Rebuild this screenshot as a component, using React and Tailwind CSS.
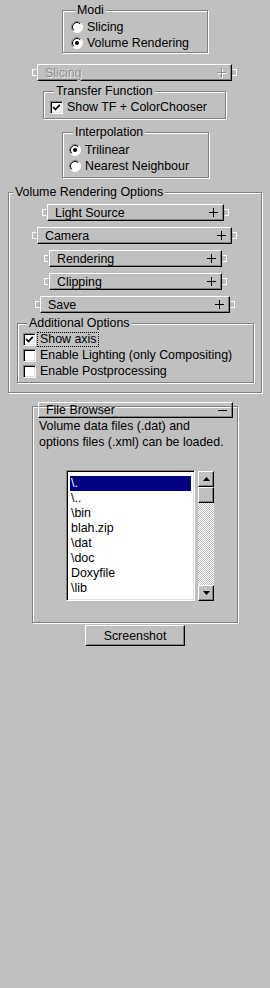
import React from 'react';

const raised =
    'border border-t-white border-l-white border-b-black border-r-black shadow-[inset_-1px_-1px_0_#808080]';

const Knob = ({ side }) => (
    <span
        className={`block shrink-0 w-[5px] h-[7px] border border-white ${side === 'left' ? 'border-r-[#a8a8a8]' : 'border-l-[#a8a8a8]'}`}
    />
);

const Sign = ({ minus, disabled }) => (
    <svg width="9" height="9" viewBox="0 0 9 9" className="shrink-0 overflow-visible">
        {disabled && <path d="M1 5.5H10M5.5 1V10" stroke="#fff" strokeWidth="1" />}
        <path
            d={minus ? 'M0 4.5H9' : 'M0 4.5H9M4.5 0V9'}
            stroke={disabled ? '#8c8c8c' : '#000'}
            strokeWidth="1"
        />
    </svg>
);

const Rollout = ({ label, className = '', knobs = true, minus, disabled, tall = true }) => (
    <div className={`flex items-center ${className}`}>
        {knobs && <Knob side="left" />}
        <div
            className={`flex-1 ${tall ? 'h-[17px]' : 'h-[16px]'} flex items-center justify-between pl-[7px] pr-[5px] leading-[14px] ${raised}`}
        >
            <span className={disabled ? 'text-[#909090] [text-shadow:1px_1px_0_#e8e8e8]' : ''}>{label}</span>
            <Sign minus={minus} disabled={disabled} />
        </div>
        {knobs && <Knob side="right" />}
    </div>
);

const Group = ({ title, className = '', children }) => (
    <fieldset
        className={`min-w-0 border border-[#808080] shadow-[inset_1px_1px_0_#fff,1px_1px_0_#fff] ${className}`}
    >
        <legend className="ml-[4px] px-[2px] leading-[14px] bg-[#c0c0c0]">{title}</legend>
        {children}
    </fieldset>
);

const Radio = ({ on }) => (
    <svg width="12" height="12" viewBox="0 0 12 12" className="shrink-0">
        <circle cx="6" cy="6" r="5.5" fill="#fff" />
        <path d="M2.1 9.9A5.5 5.5 0 0 1 9.9 2.1" fill="none" stroke="#808080" strokeWidth="1" />
        <path d="M2.8 9.2A4.5 4.5 0 0 1 9.2 2.8" fill="none" stroke="#000" strokeWidth="1" />
        <path d="M9.9 2.1A5.5 5.5 0 0 1 2.1 9.9" fill="none" stroke="#fff" strokeWidth="1" />
        {on && <circle cx="6" cy="6" r="2" fill="#000" />}
    </svg>
);

const RadioRow = ({ on, label }) => (
    <div className="flex items-center h-[16px] gap-[4px] leading-[14px]">
        <Radio on={on} />
        <span>{label}</span>
    </div>
);

const Check = ({ checked }) => (
    <span className="shrink-0 flex items-center justify-center w-[13px] h-[13px] bg-white border border-t-[#808080] border-l-[#808080] border-b-white border-r-white shadow-[inset_1px_1px_0_#000,inset_-1px_-1px_0_#dfdfdf]">
        {checked && (
            <svg width="9" height="9" viewBox="0 0 9 9">
                <polyline points="1.2,4 3.5,6.5 7.8,1.8" fill="none" stroke="#000" strokeWidth="1.8" />
            </svg>
        )}
    </span>
);

const CheckRow = ({ checked, label, focus }) => (
    <div className="flex items-center h-[16px] gap-[1px]">
        <Check checked={checked} />
        <span
            className={`px-[2px] leading-[13px] border ${focus ? 'border-dotted border-black' : 'border-transparent'}`}
        >
            {label}
        </span>
    </div>
);

const Arrow = ({ up }) => (
    <div className={`h-[16px] flex items-center justify-center ${raised}`}>
        <svg width="7" height="4" viewBox="0 0 7 4">
            <path d={up ? 'M3.5 0L7 4H0Z' : 'M0 0H7L3.5 4Z'} fill="#000" />
        </svg>
    </div>
);

const files = ['\\.', '\\..', '\\bin', 'blah.zip', '\\dat', '\\doc', 'Doxyfile', '\\lib'];

export default function App() {
    return (
        <div className="w-[270px] h-[988px] bg-[#c0c0c0] text-black text-[12.4px] font-['Liberation_Sans',Arial,sans-serif] flex flex-col">
            <Group title="Modi" className="mt-[3px] ml-[62px] w-[146px] pl-[8px] pb-[1px]">
                <div className="mt-[2px]">
                    <RadioRow label="Slicing" />
                    <RadioRow on label="Volume Rendering" />
                </div>
            </Group>

            <Rollout label="Slicing" disabled className="mt-[11px] ml-[32px] w-[205px]" />

            <Group title="Transfer Function" className="mt-[3px] ml-[43px] w-[183px] pl-[6px] pb-[3px]">
                <div className="mt-[1px]">
                    <CheckRow checked label="Show TF + ColorChooser" />
                </div>
            </Group>

            <Group title="Interpolation" className="mt-[6px] ml-[62px] w-[147px] pl-[6px] pb-[3px]">
                <div className="mt-[3px]">
                    <RadioRow on label="Trilinear" />
                    <RadioRow label="Nearest Neighbour" />
                </div>
            </Group>

            <Group title="Volume Rendering Options" className="mt-[7px] ml-[8px] w-[254px] pb-[9px]">
                <div className="flex flex-col gap-[6px] mt-[5px]">
                    <Rollout label="Light Source" className="ml-[33px] w-[187px]" />
                    <Rollout label="Camera" className="ml-[23px] w-[205px]" />
                    <Rollout label="Rendering" className="ml-[35px] w-[183px]" />
                    <Rollout label="Clipping" className="ml-[35px] w-[183px]" />
                    <Rollout label="Save" className="ml-[26px] w-[200px]" />
                </div>
                <Group title="Additional Options" className="mt-[3px] ml-[8px] w-[237px] pl-[5px] pb-[3px]">
                    <div className="mt-[1px]">
                        <CheckRow checked focus label="Show axis" />
                        <CheckRow label="Enable Lighting (only Compositing)" />
                        <CheckRow label="Enable Postprocessing" />
                    </div>
                </Group>
            </Group>

            <div className="mt-[13px] ml-[32px] w-[206px] border border-[#808080] shadow-[inset_1px_1px_0_#fff,1px_1px_0_#fff] pb-[21px]">
                <Rollout label="File Browser" minus knobs={false} tall={false} className="-mt-[5px] ml-[5px] mr-[4px]" />
                <div className="pl-[6px] leading-[16px]">
                    <p>Volume data files (.dat) and</p>
                    <p>options files (.xml) can be loaded.</p>
                </div>
                <div className="flex items-start mt-[20px] ml-[33px]">
                    <div className="w-[129px] h-[131px] bg-white border border-t-[#808080] border-l-[#808080] border-b-white border-r-white shadow-[inset_1px_1px_0_#000,inset_-1px_-1px_0_#dfdfdf] px-[3px] pt-[5px] leading-[15px]">
                        {files.map((f, i) => (
                            <div key={f} className={`h-[15px] pl-[1px] ${i === 0 ? 'bg-[#000080] text-white' : ''}`}>
                                {f}
                            </div>
                        ))}
                    </div>
                    <div className="ml-[3px] mt-[1px] w-[16px] h-[130px] flex flex-col">
                        <Arrow up />
                        <div className={`h-[16px] ${raised}`} />
                        <div className="flex-1 bg-[image:repeating-conic-gradient(#c0c0c0_0%_25%,#fff_0%_50%)] bg-[length:2px_2px]" />
                        <Arrow />
                    </div>
                </div>
            </div>

            <button
                className={`mt-[2px] ml-[85px] w-[100px] h-[21px] flex items-center justify-center leading-[14px] ${raised}`}
            >
                Screenshot
            </button>
        </div>
    );
}
